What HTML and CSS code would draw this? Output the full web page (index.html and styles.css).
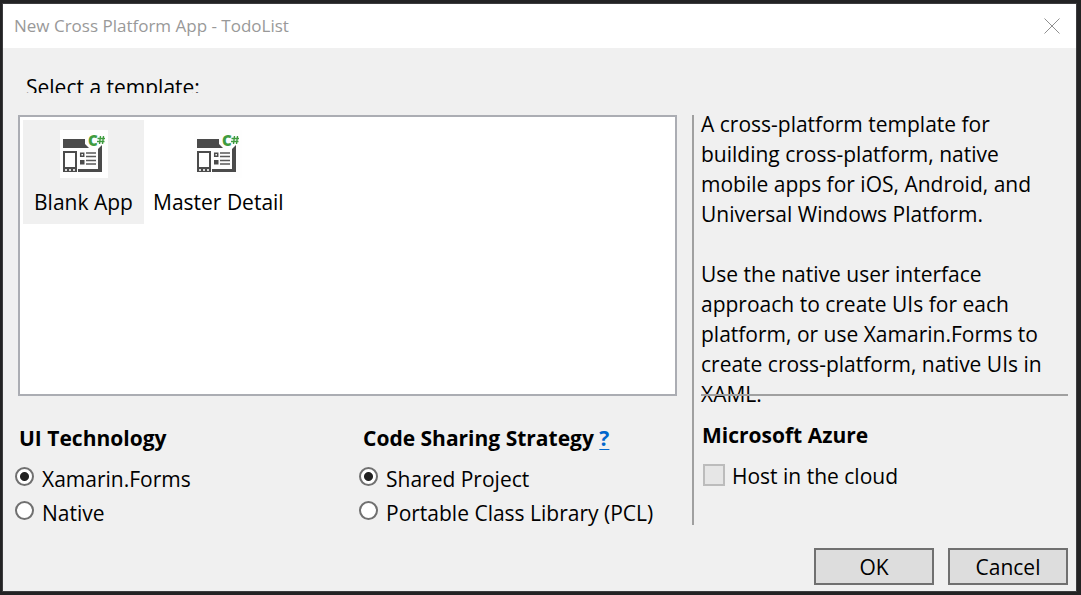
FILE: index.html
```html
<!DOCTYPE html>
<html lang="en">
<head>
<meta charset="utf-8">
<title>New Cross Platform App - TodoList</title>
<link rel="stylesheet" href="styles.css">
</head>
<body>
<main class="dialog">
  <header class="titlebar">
    <h1 class="title">New Cross Platform App - TodoList</h1>
    <button class="close" type="button" aria-label="Close">
      <svg width="16" height="16" viewBox="0 0 16 16"><path d="M.5.5l15 15M15.500.5l-15 15" stroke="#8f8f8f" fill="none"/></svg>
    </button>
  </header>
  <form class="content">
    <p class="prompt" id="prompt">Select a template:</p>
    <div class="columns">
      <div class="left">
        <div class="templates" role="group" aria-labelledby="prompt">
          <button class="template selected" type="button" aria-pressed="true">
            <svg class="template-icon" viewBox="0 0 48 48" aria-hidden="true">
              <rect width="48" height="48" fill="#fefefe"/>
              <path d="M3 9h22v5l4 4H3z" fill="#4b4b4b"/>
              <path d="M38 19l4-4v27H18v-3h20z" fill="#4b4b4b"/>
              <path fill-rule="evenodd" d="M3 21h14v21H3zM5 23v14h10V23z" fill="#4b4b4b"/>
              <path d="M5 39h2v2H5zM9 39h2v2H9zM13 39h2v2h-2z" fill="#d8d8d8"/>
              <path d="M20.700 23.200h3v3h-3z" fill="none" stroke="#4b4b4b" stroke-width="1.500"/>
              <path d="M20 30h4.500v4.500H20z" fill="#4b4b4b"/>
              <path d="M26 23h10M26 26.500h10M26 30.500h10M26 34h10" stroke="#5a5a5a" stroke-width="1.300"/>
              <text class="icon-text" x="28" y="16">C</text>
              <path d="M40.500 6l-1 8M43.500 6l-1 8M37.500 8.500h7.500M37 11.500h7.500" stroke="#3f9c3f" stroke-width="1.400"/>
            </svg>Blank App
          </button>
          <button class="template" type="button" aria-pressed="false">
            <svg class="template-icon" viewBox="0 0 48 48" aria-hidden="true">
              <rect width="48" height="48" fill="#fefefe"/>
              <path d="M3 9h22v5l4 4H3z" fill="#4b4b4b"/>
              <path d="M38 19l4-4v27H18v-3h20z" fill="#4b4b4b"/>
              <path fill-rule="evenodd" d="M3 21h14v21H3zM5 23v14h10V23z" fill="#4b4b4b"/>
              <path d="M5 39h2v2H5zM9 39h2v2H9zM13 39h2v2h-2z" fill="#d8d8d8"/>
              <path d="M20.700 23.200h3v3h-3z" fill="none" stroke="#4b4b4b" stroke-width="1.500"/>
              <path d="M20 30h4.500v4.500H20z" fill="#4b4b4b"/>
              <path d="M26 23h10M26 26.500h10M26 30.500h10M26 34h10" stroke="#5a5a5a" stroke-width="1.300"/>
              <text class="icon-text" x="28" y="16">C</text>
              <path d="M40.500 6l-1 8M43.500 6l-1 8M37.500 8.500h7.500M37 11.500h7.500" stroke="#3f9c3f" stroke-width="1.400"/>
            </svg>Master Detail
          </button>
        </div>
        <div class="options">
          <section role="radiogroup" aria-labelledby="ui-heading">
            <h2 class="heading" id="ui-heading">UI Technology</h2>
            <label class="choice"><input class="radio" type="radio" name="ui" checked>Xamarin.Forms</label>
            <label class="choice"><input class="radio" type="radio" name="ui">Native</label>
          </section>
          <section role="radiogroup" aria-labelledby="code-heading">
            <h2 class="heading"><span id="code-heading">Code Sharing Strategy</span> <a class="help" href="#code-heading">?</a></h2>
            <label class="choice"><input class="radio" type="radio" name="code" checked>Shared Project</label>
            <label class="choice"><input class="radio" type="radio" name="code">Portable Class Library (PCL)</label>
          </section>
        </div>
      </div>
      <aside class="right">
        <div class="description">
          <p>A cross-platform template for building cross-platform, native mobile apps for iOS, Android, and Universal Windows Platform.</p>
          <p>Use the native user interface approach to create UIs for each platform, or use Xamarin.Forms to create cross-platform, native UIs in XAML.</p>
        </div>
        <section class="azure">
          <h2 class="heading">Microsoft Azure</h2>
          <label class="choice"><input class="check" type="checkbox" disabled>Host in the cloud</label>
        </section>
      </aside>
    </div>
    <footer class="actions">
      <button class="action" type="submit">OK</button>
      <button class="action" type="button">Cancel</button>
    </footer>
  </form>
</main>
</body>
</html>
```
FILE: styles.css
```css
* {
  box-sizing: border-box;
}

body {
  margin: 0;
  min-height: 100vh;
  display: flex;
  padding: 3px 4px 3px 2px;
  background: #232324;
  color: #000;
  font: 21px/30px "Open Sans", "Noto Sans", sans-serif;
}

h1, h2, p {
  margin: 0;
}

button, input {
  margin: 0;
  font: inherit;
  color: inherit;
}

.icon-text {
  font: 800 15px "Open Sans", sans-serif;
  fill: #3f9c3f;
}

.dialog {
  flex: 1;
  display: flex;
  flex-direction: column;
  border: 1px solid #3c3c3e;
  background: #f0f0f0;
}

.titlebar {
  display: flex;
  align-items: center;
  justify-content: space-between;
  height: 44px;
  padding: 0 16px 0 11px;
  background: #fff;
}

.title {
  font-size: 17px;
  font-weight: 400;
  color: #999;
}

.close {
  display: flex;
  padding: 0;
  border: 0;
  background: none;
}

.content {
  flex: 1;
  display: flex;
  flex-direction: column;
  padding: 24px 8px 6px 15px;
}

/* The prompt's row is shorter than its line, so the text is clipped. */
.prompt {
  height: 21px;
  margin: 0 0 22px 8px;
  overflow: hidden;
}

.columns {
  display: grid;
  grid-template-columns: minmax(0, 659fr) minmax(0, 376fr);
  column-gap: 15px;
}

.templates {
  display: flex;
  align-items: flex-start;
  height: 281px;
  padding: 3px;
  border: 2px solid #abadb3;
  background: #fff;
}

.template {
  display: flex;
  flex-direction: column;
  align-items: center;
  gap: 9px;
  min-width: 121px;
  padding: 10px 9px 7px;
  border: 0;
  background: none;
}

.selected {
  background: #f0f0f0;
}

.template-icon {
  width: 48px;
  height: 48px;
}

.options {
  display: grid;
  grid-template-columns: 344fr 315fr;
  padding-top: 27px;
}

.heading {
  margin-bottom: 11px;
  font-size: 21px;
  font-weight: 700;
}

.options .heading {
  padding-left: 1px;
}

.help {
  color: #0066cc;
  text-decoration-thickness: 1px;
  text-underline-offset: 3px;
}

.choice {
  display: flex;
  align-items: center;
  gap: 8px;
  margin-bottom: 4px;
}

.options .choice {
  margin-left: -3px;
}

.radio {
  appearance: none;
  flex: none;
  width: 19px;
  height: 19px;
  margin-bottom: 5px;
  border: 2px solid #707070;
  border-radius: 50%;
  background: #fff;
}

.radio:checked {
  background: radial-gradient(circle, #222 4px, #fff 5px);
}

.right {
  height: 410px;
  padding-left: 7px;
  border-left: 2px solid #a0a0a0;
}

.description {
  display: flex;
  flex-direction: column;
  gap: 30px;
  height: 279px;
  margin-top: -6px;
  margin-bottom: 6px;
}

/* The rule is painted over the last line of a long description. */
.azure {
  position: relative;
  padding: 24px 0 0 1px;
  border-top: 2px solid #a0a0a0;
}

.azure .choice {
  padding-left: 1px;
  gap: 7px;
}

.check {
  appearance: none;
  flex: none;
  width: 22px;
  height: 22px;
  margin-bottom: 3px;
  border: 2px solid #bcbcbc;
  background: #e6e6e6;
}

.actions {
  display: flex;
  justify-content: flex-end;
  gap: 14px;
  margin-top: auto;
}

.action {
  width: 120px;
  height: 37px;
  padding: 0;
  border: 2px solid #707070;
  background: #ddd;
}
```
